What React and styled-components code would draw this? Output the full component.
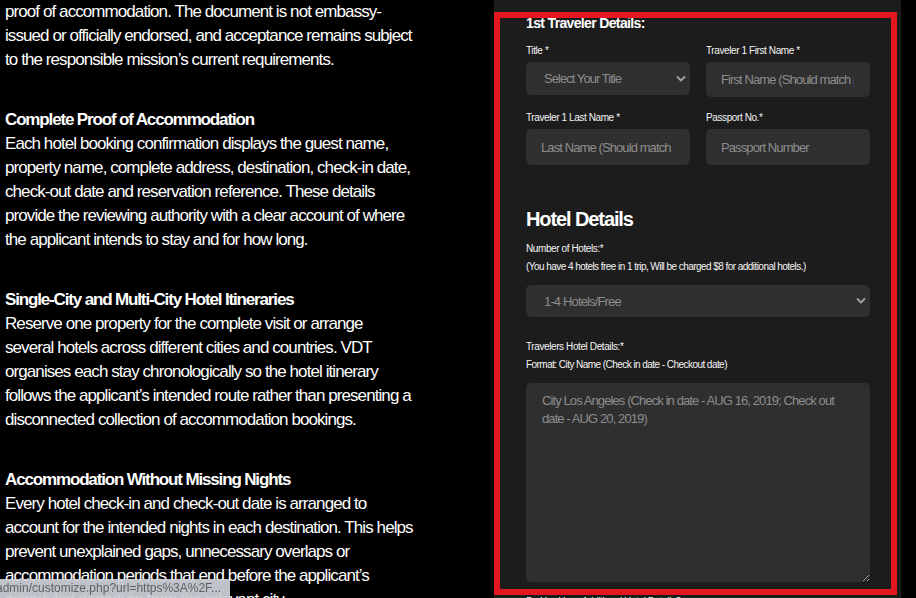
import React from "react";
import styled, { createGlobalStyle } from "styled-components";

const GlobalStyle = createGlobalStyle`
  html, body {
    margin: 0;
    padding: 0;
    background: #000;
  }
  body {
    overflow: hidden;
    font-family: "Liberation Sans", Arial, sans-serif;
  }
  * { box-sizing: border-box; }
`;

const Page = styled.div`
  display: grid;
  grid-template-columns: 494px 407px;
  height: 598px;
  overflow: hidden;
  background: #000;
`;

const Article = styled.div`
  padding-left: 5px;
  color: #fff;
`;

const Section = styled.section`
  margin-bottom: 36px;
`;

const SectionTitle = styled.h3`
  margin: 0;
  font-size: 17px;
  line-height: 24px;
  font-weight: 700;
  letter-spacing: -1.15px;
`;

const Paragraph = styled.p`
  margin: 0;
`;

const Line = styled.span`
  display: block;
  white-space: nowrap;
  font-size: 17px;
  line-height: 24px;
  letter-spacing: -0.92px;
`;

const Panel = styled.div`
  position: relative;
  background: #1c1c1c;
  padding: 15px 31px 0 32px;
  color: #f2f2f2;
  overflow: hidden;
`;

const FormTitle = styled.h4`
  margin: 0 0 10px;
  font-size: 14px;
  line-height: 17px;
  font-weight: 700;
  letter-spacing: -0.65px;
  color: #fff;
`;

const FieldGrid = styled.div`
  display: grid;
  grid-template-columns: 164px 164px;
  column-gap: 16px;
  row-gap: 12px;
`;

const Field = styled.div`
  display: flex;
  flex-direction: column;
`;

const Label = styled.label`
  display: block;
  font-size: 10px;
  line-height: 18px;
  letter-spacing: -0.4px;
  margin-bottom: ${(p) => (p.$gap ? `${p.$gap}px` : "2px")};
  color: #f4f4f4;
`;

const LabelText = styled.span`
  display: block;
  letter-spacing: ${(p) => (p.$note ? "-0.55px" : "-0.4px")};
`;

const controlBase = `
  width: 100%;
  border: none;
  outline: none;
  background: #2f2f2f;
  border-radius: 5px;
  color: #8d8d8d;
  font-family: "Liberation Sans", Arial, sans-serif;
  font-size: 13px;
  letter-spacing: -0.9px;
`;

const TextInput = styled.input`
  ${controlBase}
  height: ${(p) => p.$h || 35}px;
  padding: 0 16px 0 15px;
  &::placeholder {
    color: #8d8d8d;
    opacity: 1;
  }
`;

const SelectWrap = styled.div`
  position: relative;
  width: 100%;
`;

const Select = styled.select`
  ${controlBase}
  appearance: none;
  -webkit-appearance: none;
  height: ${(p) => p.$h || 33}px;
  padding: 0 24px 0 18px;
  letter-spacing: ${(p) => p.$ls || "-0.95px"};
`;

const Chevron = styled.svg`
  position: absolute;
  right: 4px;
  top: 50%;
  width: 10px;
  height: 7px;
  transform: translateY(-50%);
  pointer-events: none;
`;

const HotelHeading = styled.h2`
  margin: 42px 0 9px;
  font-size: 20px;
  line-height: 24px;
  font-weight: 700;
  letter-spacing: -1.1px;
  color: #fff;
`;

const TextArea = styled.textarea`
  ${controlBase}
  display: block;
  height: 199px;
  padding: 9px 16px;
  line-height: 18px;
  resize: vertical;
  color-scheme: dark;
  &::placeholder {
    color: #8d8d8d;
    opacity: 1;
  }
`;

const Block = styled.div`
  margin-top: ${(p) => p.$top || 0}px;
`;

const Highlight = styled.div`
  position: absolute;
  left: 0;
  top: 12px;
  width: 403px;
  height: 583px;
  border: 6px solid #e4161f;
  pointer-events: none;
`;

const StatusBubble = styled.div`
  position: fixed;
  left: 0;
  bottom: 0;
  width: 230px;
  height: 19px;
  padding-top: 2px;
  background: rgba(203, 206, 213, 0.94);
  color: #5d5f63;
  font-family: "Liberation Sans", Arial, sans-serif;
  font-size: 12px;
  line-height: 15px;
  text-indent: -4px;
  white-space: nowrap;
  overflow: hidden;
  border-top-right-radius: 2px;
`;

const sections = [
  {
    lines: [
      "proof of accommodation. The document is not embassy-",
      "issued or officially endorsed, and acceptance remains subject",
      "to the responsible mission\u2019s current requirements.",
    ],
  },
  {
    title: "Complete Proof of Accommodation",
    lines: [
      "Each hotel booking confirmation displays the guest name,",
      "property name, complete address, destination, check-in date,",
      "check-out date and reservation reference. These details",
      "provide the reviewing authority with a clear account of where",
      "the applicant intends to stay and for how long.",
    ],
  },
  {
    title: "Single-City and Multi-City Hotel Itineraries",
    lines: [
      "Reserve one property for the complete visit or arrange",
      "several hotels across different cities and countries. VDT",
      "organises each stay chronologically so the hotel itinerary",
      "follows the applicant\u2019s intended route rather than presenting a",
      "disconnected collection of accommodation bookings.",
    ],
  },
  {
    title: "Accommodation Without Missing Nights",
    lines: [
      "Every hotel check-in and check-out date is arranged to",
      "account for the intended nights in each destination. This helps",
      "prevent unexplained gaps, unnecessary overlaps or",
      "accommodation periods that end before the applicant\u2019s",
      "scheduled departure from the relevant city.",
    ],
  },
];

function ChevronIcon() {
  return (
    <Chevron viewBox="0 0 10 7">
      <path d="M1.5 1.5 L5 5 L8.5 1.5" fill="none" stroke="#a3a3a3" strokeWidth="1.8" strokeLinecap="round" strokeLinejoin="round" />
    </Chevron>
  );
}

export default function App() {
  return (
    <>
      <GlobalStyle />
      <Page>
        <Article>
          {sections.map((s, i) => (
            <Section key={i}>
              {s.title && <SectionTitle>{s.title}</SectionTitle>}
              <Paragraph>
                {s.lines.map((l) => (
                  <Line key={l}>{l}</Line>
                ))}
              </Paragraph>
            </Section>
          ))}
        </Article>

        <Panel>
          <FormTitle>1st Traveler Details:</FormTitle>
          <FieldGrid>
            <Field>
              <Label>Title *</Label>
              <SelectWrap>
                <Select defaultValue="">
                  <option value="">Select Your Title</option>
                  <option>Mr.</option>
                  <option>Mrs.</option>
                  <option>Ms.</option>
                </Select>
                <ChevronIcon />
              </SelectWrap>
            </Field>
            <Field>
              <Label>Traveler 1 First Name *</Label>
              <TextInput placeholder="First Name (Should match passport)" />
            </Field>
            <Field>
              <Label>Traveler 1 Last Name *</Label>
              <TextInput $h={36} placeholder="Last Name (Should match passport)" />
            </Field>
            <Field>
              <Label>Passport No.*</Label>
              <TextInput $h={36} placeholder="Passport Number" />
            </Field>
          </FieldGrid>

          <HotelHeading>Hotel Details</HotelHeading>
          <Label as="div" $gap={9}>
            <LabelText>Number of Hotels:*</LabelText>
            <LabelText $note>(You have 4 hotels free in 1 trip, Will be charged $8 for additional hotels.)</LabelText>
          </Label>
          <SelectWrap>
            <Select $h={32} $ls="-0.85px" defaultValue="1-4">
              <option value="1-4">1-4 Hotels/Free</option>
              <option value="5">5 Hotels/$8</option>
              <option value="6">6 Hotels/$16</option>
            </Select>
            <ChevronIcon />
          </SelectWrap>

          <Block $top={21}>
            <Label as="div" $gap={9}>
              <LabelText>Travelers Hotel Details:*</LabelText>
              <LabelText $note>Format: City Name (Check in date - Checkout date)</LabelText>
            </Label>
            <TextArea placeholder="City Los Angeles (Check in date - AUG 16, 2019; Check out date - AUG 20, 2019)" />
          </Block>

          <Block $top={11}>
            <Label>Do You Have Additional Hotel Details?</Label>
          </Block>

          <Highlight />
        </Panel>
      </Page>
      <StatusBubble>admin/customize.php?url=https%3A%2F...</StatusBubble>
    </>
  );
}
